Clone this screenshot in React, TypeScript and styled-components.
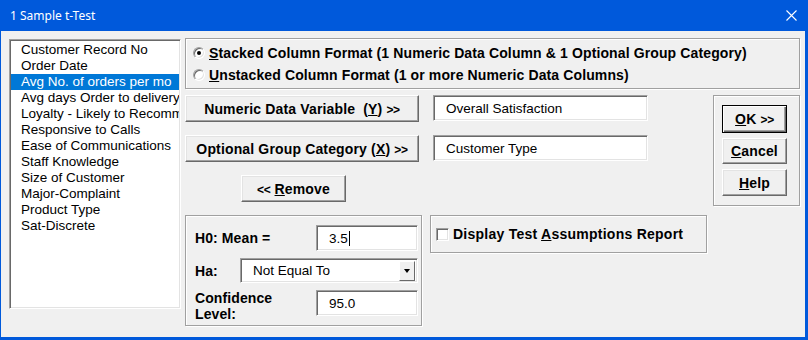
import React from "react";
import styled, { createGlobalStyle } from "styled-components";

const Global = createGlobalStyle`
  html, body { margin: 0; padding: 0; background: #f0f0f0; }
  * { box-sizing: border-box; }
`;

const Window = styled.div`
  width: 808px;
  height: 340px;
  background: #f0f0f0;
  border-left: 1px solid #0059db;
  border-right: 3px solid #0059db;
  border-bottom: 3px solid #0059db;
  font-family: "Liberation Sans", Arial, sans-serif;
  color: #000;
  display: flex;
  flex-direction: column;
  overflow: hidden;
`;

const TitleBar = styled.div`
  height: 31px;
  background: #0059db;
  color: #fff;
  display: flex;
  align-items: center;
  padding-left: 9px;
  padding-right: 8px;
  font-family: "Noto Sans", "Open Sans", sans-serif;
  font-size: 12px;
  flex-shrink: 0;
`;

const Title = styled.span`
  flex: 1;
`;

const CloseIcon = styled.svg`
  width: 11px;
  height: 11px;
`;

const Body = styled.div`
  flex: 1;
  display: flex;
  align-items: flex-start;
  padding: 7px 0 0 8px;
`;

const ListBox = styled.div`
  width: 172px;
  height: 270px;
  margin-top: 1px;
  background: #fff;
  border: 1px solid;
  border-color: #a0a0a0 #ffffff #ffffff #a0a0a0;
  box-shadow: inset 1px 1px 0 #696969, inset -1px -1px 0 #e3e3e3;
  padding: 2px 1px;
  font-size: 13.5px;
  overflow: hidden;
`;

const ListItem = styled.div<{ $selected?: boolean }>`
  height: 16px;
  line-height: 16px;
  padding-left: 10px;
  white-space: nowrap;
  overflow: hidden;
  background: ${(p) => (p.$selected ? "#0078d7" : "transparent")};
  color: ${(p) => (p.$selected ? "#fff" : "#000")};
`;

const RightPane = styled.div`
  margin-left: 4px;
  display: flex;
  flex-direction: column;
`;

const GroupBox = styled.div<{ $w: number; $h: number }>`
  width: ${(p) => p.$w}px;
  height: ${(p) => p.$h}px;
  border: 1px solid #a0a0a0;
  box-shadow: inset 1px 1px 0 #fff, 1px 1px 0 #fff;
`;

const RadioGroup = styled(GroupBox)`
  padding: 4px 0 0 7px;
  display: flex;
  flex-direction: column;
  gap: 2px;
`;

const OptionRow = styled.label`
  height: 20px;
  display: flex;
  align-items: center;
  gap: 4px;
  font-size: 14px;
  font-weight: bold;
  letter-spacing: 0.12px;
  white-space: nowrap;
`;

const Radio = styled.span<{ $checked?: boolean }>`
  width: 12px;
  height: 12px;
  border-radius: 50%;
  background: #fff;
  border: 1px solid;
  border-color: #a0a0a0 #fff #fff #a0a0a0;
  box-shadow: inset 1px 1px 0 #696969, inset -1px -1px 0 #e3e3e3;
  display: flex;
  align-items: center;
  justify-content: center;
  flex-shrink: 0;
  &::after {
    content: "";
    width: 4px;
    height: 4px;
    border-radius: 50%;
    background: ${(p) => (p.$checked ? "#000" : "transparent")};
  }
`;

const Lower = styled.div`
  display: flex;
  margin-top: 6px;
`;

const LeftArea = styled.div`
  display: flex;
  flex-direction: column;
`;

const Row = styled.div<{ $top?: number }>`
  display: flex;
  align-items: flex-start;
  margin-top: ${(p) => p.$top ?? 0}px;
`;

const Button = styled.button<{ $w: number; $h?: number; $default?: boolean }>`
  width: ${(p) => p.$w}px;
  height: ${(p) => p.$h ?? 27}px;
  margin: 0;
  padding: 0;
  background: #f0f0f0;
  font-family: "Liberation Sans", Arial, sans-serif;
  font-size: 14px;
  font-weight: bold;
  letter-spacing: 0.15px;
  color: #000;
  white-space: nowrap;
  border: 1px solid;
  border-color: ${(p) => (p.$default ? "#000" : "#fff #696969 #696969 #fff")};
  box-shadow: ${(p) =>
    p.$default
      ? "inset 1px 1px 0 #fff, inset -1px -1px 0 #696969, inset -2px -2px 0 #a0a0a0"
      : "inset -1px -1px 0 #a0a0a0, inset 1px 1px 0 #e3e3e3"};
  cursor: default;
`;

const Chev = styled.span`
  font-size: 12px;
  letter-spacing: -0.3px;
`;

const TextField = styled.div<{ $w: number; $h?: number; $pad?: number }>`
  width: ${(p) => p.$w}px;
  height: ${(p) => p.$h ?? 26}px;
  background: #fff;
  border: 1px solid;
  border-color: #a0a0a0 #fff #fff #a0a0a0;
  box-shadow: inset 1px 1px 0 #696969, inset -1px -1px 0 #e3e3e3;
  padding-left: ${(p) => p.$pad ?? 12}px;
  display: flex;
  align-items: center;
  font-size: 13.5px;
  white-space: nowrap;
`;

const Caret = styled.span`
  display: inline-block;
  width: 1px;
  height: 15px;
  background: #000;
  margin-left: 1px;
`;

const ParamGroup = styled(GroupBox)`
  padding: 9px 3px 0 9px;
  display: flex;
  flex-direction: column;
  gap: 7px;
`;

const ParamRow = styled.div<{ $align?: string }>`
  display: flex;
  align-items: ${(p) => p.$align ?? "center"};
  justify-content: space-between;
`;

const Label = styled.div`
  font-size: 14px;
  font-weight: bold;
  letter-spacing: 0.1px;
  line-height: 16px;
  white-space: nowrap;
`;

const Combo = styled(TextField)`
  justify-content: space-between;
  padding-right: 2px;
`;

const DropButton = styled.span`
  width: 16px;
  height: 20px;
  background: #f0f0f0;
  border: 1px solid;
  border-color: #fff #696969 #696969 #fff;
  display: flex;
  align-items: center;
  justify-content: center;
  &::after {
    content: "";
    border-left: 3.5px solid transparent;
    border-right: 3.5px solid transparent;
    border-top: 4px solid #000;
    margin-top: 1px;
  }
`;

const CheckGroup = styled(GroupBox)`
  margin-left: 8px;
  padding-left: 5px;
  display: flex;
  align-items: center;
  gap: 4px;
  font-size: 14px;
  font-weight: bold;
  letter-spacing: 0.25px;
  white-space: nowrap;
`;

const CheckBox = styled.span`
  width: 13px;
  height: 13px;
  background: #fff;
  border: 1px solid;
  border-color: #a0a0a0 #fff #fff #a0a0a0;
  box-shadow: inset 1px 1px 0 #696969, inset -1px -1px 0 #e3e3e3;
`;

const ActionGroup = styled(GroupBox)`
  margin-left: 6px;
  padding: 9px 0 0 8px;
  display: flex;
  flex-direction: column;
  gap: 5px;
`;

const items = [
  "Customer Record No",
  "Order Date",
  "Avg No. of orders per mo",
  "Avg days Order to delivery",
  "Loyalty - Likely to Recommend",
  "Responsive to Calls",
  "Ease of Communications",
  "Staff Knowledge",
  "Size of Customer",
  "Major-Complaint",
  "Product Type",
  "Sat-Discrete",
];

export default function App() {
  return (
    <>
      <Global />
      <Window>
        <TitleBar>
          <Title>1 Sample t-Test</Title>
          <CloseIcon viewBox="0 0 11 11">
            <path d="M0.5 0.5 L10.5 10.5 M10.5 0.5 L0.5 10.5" stroke="#fff" strokeWidth="1.1" fill="none" />
          </CloseIcon>
        </TitleBar>
        <Body>
          <ListBox>
            {items.map((it, i) => (
              <ListItem key={it} $selected={i === 2}>
                {it}
              </ListItem>
            ))}
          </ListBox>
          <RightPane>
            <RadioGroup $w={615} $h={51}>
              <OptionRow>
                <Radio $checked />
                <span>
                  <u>S</u>tacked Column Format (1 Numeric Data Column &amp; 1 Optional Group Category)
                </span>
              </OptionRow>
              <OptionRow>
                <Radio />
                <span>
                  <u>U</u>nstacked Column Format (1 or more Numeric Data Columns)
                </span>
              </OptionRow>
            </RadioGroup>
            <Lower>
              <LeftArea>
                <Row>
                  <Button $w={234}>
                    Numeric Data Variable&nbsp;&nbsp;(<u>Y</u>) <Chev>&gt;&gt;</Chev>
                  </Button>
                  <TextField $w={215} style={{ marginLeft: 14 }}>Overall Satisfaction</TextField>
                </Row>
                <Row $top={13}>
                  <Button $w={234}>
                    Optional Group Category (<u>X</u>) <Chev>&gt;&gt;</Chev>
                  </Button>
                  <TextField $w={215} style={{ marginLeft: 14 }}>Customer Type</TextField>
                </Row>
                <Row $top={13}>
                  <Button $w={105} style={{ marginLeft: 56 }}>
                    <Chev>&lt;&lt;</Chev> <u>R</u>emove
                  </Button>
                </Row>
                <Row $top={13}>
                  <ParamGroup $w={237} $h={111}>
                    <ParamRow>
                      <Label>H0: Mean =</Label>
                      <TextField $w={102}>
                        3.5
                        <Caret />
                      </TextField>
                    </ParamRow>
                    <ParamRow>
                      <Label>Ha:</Label>
                      <Combo $w={178} $h={25} $pad={12}>
                        Not Equal To
                        <DropButton />
                      </Combo>
                    </ParamRow>
                    <ParamRow $align="flex-start">
                      <Label>
                        Confidence
                        <br />
                        Level:
                      </Label>
                      <TextField $w={102}>95.0</TextField>
                    </ParamRow>
                  </ParamGroup>
                  <CheckGroup $w={277} $h={38}>
                    <CheckBox />
                    <span>
                      Display Test <u>A</u>ssumptions Report
                    </span>
                  </CheckGroup>
                </Row>
              </LeftArea>
              <ActionGroup $w={87} $h={111}>
                <Button $w={65} $h={28} $default>
                  <u>O</u>K <Chev>&gt;&gt;</Chev>
                </Button>
                <Button $w={65} $h={26}>
                  <u>C</u>ancel
                </Button>
                <Button $w={65}>
                  <u>H</u>elp
                </Button>
              </ActionGroup>
            </Lower>
          </RightPane>
        </Body>
      </Window>
    </>
  );
}
